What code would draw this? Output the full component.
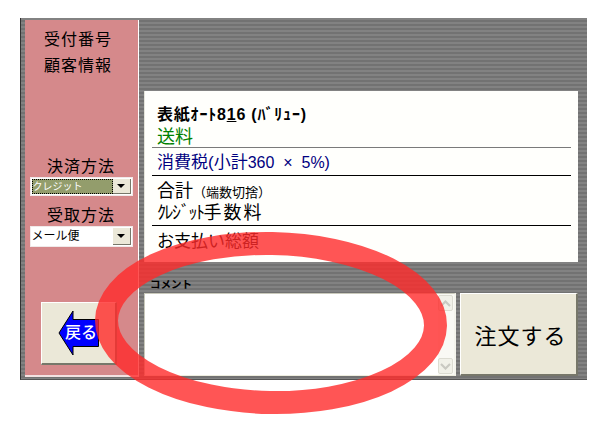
<div class="window">
	<aside class="side">
		<div class="info">
			<div>受付番号</div>
			<div>顧客情報</div>
		</div>

		<div class="field pay">
			<div class="field-label">決済方法</div>
			<div class="select small">
				<span class="value selected">クレジット</span>
				<span class="drop"><i></i></span>
			</div>
		</div>

		<div class="field recv">
			<div class="field-label">受取方法</div>
			<div class="select">
				<span class="value">メール便</span>
				<span class="drop"><i></i></span>
			</div>
		</div>

		<button class="back">
			<svg width="42" height="48" viewBox="0 0 42 48">
				<polygon points="1,24 15,2 15,10.500 40.500,10.500 40.500,37.500 15,37.500 15,46" fill="#0000ff" stroke="#000" />
			</svg>
			<span>戻る</span>
		</button>
	</aside>

	<main class="main">
		<section class="receipt">
			<div class="block items">
				<div class="product">表紙ｵｰﾄ8<u>1</u>6 (ﾊﾞﾘｭｰ)</div>
				<div class="green">送料</div>
			</div>
			<div class="block tax">消費税(小計<span>360 &nbsp;×&nbsp; 5%)</span></div>
			<div class="block total">
				<div>合計<small>（端数切捨）</small></div>
				<div><span class="kana">ｸﾚｼﾞｯﾄ</span><span class="fee">手数料</span></div>
			</div>
			<div class="block grand">お支払い総額</div>
		</section>

		<div class="comment-label">コメント</div>
		<div class="bottom">
			<div class="textarea">
				<div class="scroll">
					<span class="arrow"><svg width="11" height="7" viewBox="0 0 11 7"><path d="M1 6 L5.500 1.500 L10 6" fill="none" stroke="#c9c9c2" stroke-width="2.200" /></svg></span>
					<span class="arrow"><svg width="11" height="7" viewBox="0 0 11 7"><path d="M1 1 L5.500 5.500 L10 1" fill="none" stroke="#c9c9c2" stroke-width="2.200" /></svg></span>
				</div>
			</div>
			<button class="order">注文する</button>
		</div>
	</main>

	<svg class="circle" width="608" height="429" viewBox="0 0 608 429">
		<ellipse cx="271" cy="323" rx="164.500" ry="79.500" fill="none" stroke="#ff2a2a" stroke-opacity="0.8" stroke-width="23" transform="rotate(1 271 323)" />
	</svg>
</div>

<style>
	:global(body) {
		margin: 0;
		background: #fff;
		font-family: "Liberation Sans", "Noto Sans CJK JP", sans-serif;
	}
	.window {
		display: flex;
		width: 567px;
		height: 362px;
		margin: 18px 0 0 20px;
		box-sizing: border-box;
		padding: 2px 9px 2px 4px;
		border-left: 1px solid #333;
		border-bottom: 1px solid #555;
		background: repeating-linear-gradient(#828282 0 2px, #727272 2px 4px);
		color: #000;
	}
	.side {
		display: flex;
		flex-direction: column;
		align-items: center;
		width: 114px;
		flex: none;
		box-sizing: border-box;
		background: #d5898b;
		border-right: 1px solid #fff;
		border-bottom: 2px solid #f3e2e2;
	}
	.info {
		margin: 7px 0 0 -7px;
		width: 68px;
		font-size: 16px;
		line-height: 26px;
		letter-spacing: 1px;
	}
	.field {
		display: flex;
		flex-direction: column;
		align-items: center;
		width: 103px;
		margin-left: -1px;
	}
	.field-label {
		font-size: 16px;
		line-height: 20px;
		letter-spacing: 1px;
	}
	.pay {
		margin-top: 78px;
	}
	.recv {
		margin-top: 10px;
	}
	.select {
		display: flex;
		align-items: stretch;
		box-sizing: border-box;
		width: 103px;
		height: 21px;
		padding: 1px;
		background: #fff;
		border: 1px solid #f0e9e9;
		font-size: 12px;
	}
	.select.small {
		height: 19px;
		font-size: 10px;
	}
	.value {
		flex: 1;
		line-height: 17px;
		overflow: hidden;
		white-space: nowrap;
	}
	.selected {
		background: #939d6c;
		color: #fff;
		border: 1px dotted #000;
		line-height: 14px;
	}
	.drop {
		display: flex;
		align-items: center;
		justify-content: center;
		width: 17px;
		flex: none;
		background: #ebe8d8;
		border-right: 1px solid #77776a;
		border-bottom: 1px solid #77776a;
	}
	.drop i {
		width: 0;
		height: 0;
		border-left: 4px solid transparent;
		border-right: 4px solid transparent;
		border-top: 4px solid #000;
	}
	.back {
		position: relative;
		display: flex;
		align-items: center;
		box-sizing: border-box;
		width: 76px;
		height: 63px;
		margin: auto 0 10px -5px;
		padding: 0 0 0 16px;
		background: #ebe8d8;
		border: 0;
		border-top: 1px solid #fff;
		border-left: 1px solid #fff;
		border-right: 2px solid #77776a;
		border-bottom: 2px solid #77776a;
		font-family: inherit;
	}
	.back span {
		position: absolute;
		left: 23px;
		top: 19px;
		color: #fff;
		font-size: 16px;
		line-height: 22px;
		font-weight: 500;
	}
	.main {
		flex: 1;
		display: flex;
		flex-direction: column;
		padding: 71px 0 0 5px;
		min-width: 0;
	}
	.receipt {
		height: 171px;
		box-sizing: border-box;
		padding: 7px 7px 0 7px;
		background: #fffffc;
		border-left: 1px solid #e6e6dc;
		font-size: 18px;
		line-height: 21px;
	}
	.block {
		padding-left: 5px;
		border-bottom: 1px solid #000;
	}
	.items {
		height: 43px;
		padding-top: 6px;
		border-bottom-color: #7a7a7a;
	}
	.product {
		font-size: 16px;
		font-weight: 700;
		letter-spacing: 0.800px;
		line-height: 22px;
	}
	.green {
		color: #008000;
		font-size: 18px;
		line-height: 23px;
	}
	.tax {
		height: 27px;
		line-height: 29px;
		color: #000080;
		font-size: 17px;
	}
	.tax span {
		font-size: 16px;
	}
	.total {
		height: 44px;
		padding-top: 5px;
		line-height: 21px;
	}
	.total small {
		font-size: 13px;
	}
	.kana {
		letter-spacing: -1.500px;
	}
	.fee {
		letter-spacing: 2px;
	}
	.grand {
		border: 0;
		line-height: 32px;
		font-size: 17px;
	}
	.comment-label {
		margin: 13px 0 0 6px;
		font-size: 10.500px;
		font-weight: 700;
		line-height: 18px;
	}
	.bottom {
		display: flex;
		gap: 4px;
		height: 83px;
	}
	.textarea {
		flex: none;
		width: 312px;
		box-sizing: border-box;
		display: flex;
		justify-content: flex-end;
		background: #fff;
		border-left: 1px solid #c9c9bb;
		border-top: 1px solid #c9c9bb;
		border-bottom: 1px solid #eeeddf;
		border-right: 2px solid #f4f4ec;
	}
	.scroll {
		display: flex;
		flex-direction: column;
		justify-content: space-between;
		width: 16px;
		padding: 1px 0;
		background: #f9f9f4;
	}
	.arrow {
		display: flex;
		align-items: center;
		justify-content: center;
		width: 15px;
		height: 16px;
		background: #f1f1e9;
		border: 1px solid #dcdcd2;
		border-radius: 2px;
		box-sizing: border-box;
	}
	.order {
		flex: none;
		width: 118px;
		padding: 0 0 0 4px;
		background: #ebe8d8;
		border: 0;
		border-top: 1px solid #fff;
		border-left: 1px solid #fff;
		border-right: 2px solid #77776a;
		border-bottom: 2px solid #77776a;
		font-family: inherit;
		font-size: 22px;
		letter-spacing: 1px;
		color: #000;
	}
	.circle {
		position: absolute;
		left: 0;
		top: 0;
		pointer-events: none;
	}
</style>
